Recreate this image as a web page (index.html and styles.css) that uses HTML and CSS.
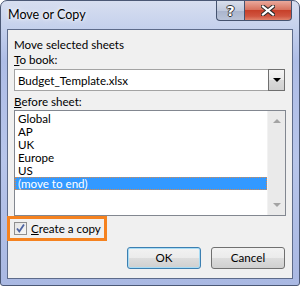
FILE: index.html
```html
<!DOCTYPE html>
<html>
<head>
<meta charset="utf-8">
<link rel="stylesheet" href="styles.css">
</head>
<body>
<div class="window">
  <div class="titlebar">
    <span class="title">Move or Copy</span>
    <div class="caption-btns">
      <div class="cap help">?</div>
      <div class="cap close">
        <svg width="14" height="11" viewBox="0 0 14 11"><path d="M2 1.5 L12 9.5 M12 1.5 L2 9.5" stroke="#2a2a2a" stroke-width="4.2" stroke-linecap="square"/><path d="M2 1.5 L12 9.5 M12 1.5 L2 9.5" stroke="#ffffff" stroke-width="2.2" stroke-linecap="square"/></svg>
      </div>
    </div>
  </div>
  <div class="client">
    <div class="label">Move selected sheets</div>
    <div class="label"><u>T</u>o book:</div>
    <div class="combo">
      <span class="combo-text">Budget_Template.xlsx</span>
      <div class="combo-btn"><span class="arrow-down"></span></div>
    </div>
    <div class="label label-gap"><u>B</u>efore sheet:</div>
    <div class="listbox">
      <ul class="items">
        <li>Global</li>
        <li>AP</li>
        <li>UK</li>
        <li>Europe</li>
        <li>US</li>
        <li class="selected">(move to end)</li>
      </ul>
      <div class="scrollbar">
        <span class="sb-up"></span>
        <span class="sb-down"></span>
      </div>
    </div>
    <div class="check-row">
      <span class="checkbox">
        <svg width="11" height="11" viewBox="0 0 11 11"><path d="M2 5.5 L4.3 8.5 L9 1.5" stroke="#4d63a0" stroke-width="1.8" fill="none"/></svg>
      </span>
      <span class="check-label"><u>C</u>reate a copy</span>
      <span class="highlight"></span>
    </div>
    <div class="buttons">
      <div class="btn btn-default">OK</div>
      <div class="btn">Cancel</div>
    </div>
  </div>
</div>
</body>
</html>
```

FILE: styles.css
```css
html, body {
  margin: 0;
  padding: 0;
  background: #ffffff;
}
body {
  font-family: Lato, "Noto Sans", sans-serif;
  font-size: 11.6px;
  color: #000;
}
.window {
  width: 300px;
  height: 286px;
  box-sizing: border-box;
  border: 1px solid #4b5875;
  border-radius: 7px 7px 3px 3px;
  background: linear-gradient(180deg, #d7def0 0px, #c4d0ec 28px, #aebde6 60px, #b7c5ea 160px, #a9b8e2 286px);
  padding: 0 6px 6px 6px;
  display: flex;
  flex-direction: column;
}
.titlebar {
  height: 28px;
  display: flex;
  align-items: flex-start;
  justify-content: space-between;
}
.title {
  margin-top: 6px;
  margin-left: 1px;
  font-size: 12.5px;
  line-height: 16px;
  text-shadow: 0 0 6px #ffffff, 0 0 3px #ffffff;
}
.caption-btns {
  display: flex;
  margin-right: 1px;
}
.cap {
  height: 19px;
  border: 1px solid #45536f;
  border-top: none;
  display: flex;
  align-items: center;
  justify-content: center;
}
.help {
  width: 27px;
  border-right: none;
  border-radius: 0 0 0 4px;
  background: linear-gradient(180deg, #d9dfec 0%, #c0c9dc 50%, #a9b4cc 51%, #b9c3d8 100%);
  color: #ffffff;
  font-family: "DejaVu Sans", sans-serif;
  font-weight: bold;
  font-size: 14px;
  text-shadow: 1px 0 0 #333, -1px 0 0 #333, 0 1px 0 #333, 0 -1px 0 #333;
}
.close {
  width: 46px;
  border-radius: 0 0 4px 0;
  background: linear-gradient(180deg, #e9a99c 0%, #d7735f 45%, #c7402a 50%, #d05540 80%, #e0836c 100%);
}
.client {
  flex: 1;
  border: 1px solid #5d6b8a;
  background: #f0f0f0;
  padding: 7px 7px 0 6px;
  display: flex;
  flex-direction: column;
}
.label {
  line-height: 15px;
  height: 15px;
  white-space: nowrap;
}
.label-gap {
  margin-top: 3px;
}
.combo {
  margin-top: 2px;
  height: 22px;
  box-sizing: border-box;
  border: 1px solid #a3a3a3;
  background: #ffffff;
  display: flex;
  align-items: center;
  justify-content: space-between;
}
.combo-text {
  padding-left: 3px;
}
.combo-btn {
  width: 17px;
  height: 22px;
  box-sizing: border-box;
  margin: -1px -1px -1px 0;
  border: 1px solid #6f6f6f;
  background: linear-gradient(180deg, #f4f4f4 0%, #eaeaea 50%, #d9d9d9 51%, #d0d0d0 100%);
  display: flex;
  align-items: center;
  justify-content: center;
}
.arrow-down {
  width: 0;
  height: 0;
  border-left: 4px solid transparent;
  border-right: 4px solid transparent;
  border-top: 4px solid #000;
}
.listbox {
  margin-top: 1px;
  margin-right: -1px;
  height: 106px;
  box-sizing: border-box;
  border: 1px solid #828790;
  background: #ffffff;
  display: flex;
}
.items {
  list-style: none;
  margin: 0;
  padding: 1px 0 0 0;
  flex: 1;
}
.items li {
  height: 13px;
  line-height: 13px;
  padding-left: 3px;
  box-sizing: border-box;
}
.items li.selected {
  background: #3399ff;
  color: #ffffff;
  border: 1px dotted #d98a4a;
  padding-left: 2px;
  line-height: 11px;
}
.scrollbar {
  width: 17px;
  background: #eaeaea;
  border-left: 1px solid #f2f2f2;
  display: flex;
  flex-direction: column;
  align-items: center;
  justify-content: space-between;
  padding: 8px 0 8px 0;
}
.sb-up {
  width: 0;
  height: 0;
  border-left: 4px solid transparent;
  border-right: 4px solid transparent;
  border-bottom: 4px solid #a3a3a3;
}
.sb-down {
  width: 0;
  height: 0;
  border-left: 4px solid transparent;
  border-right: 4px solid transparent;
  border-top: 4px solid #a3a3a3;
}
.check-row {
  position: relative;
  margin-top: 6px;
  height: 13px;
  display: flex;
  align-items: center;
  gap: 4px;
  padding-left: 0;
}
.checkbox {
  width: 13px;
  height: 13px;
  box-sizing: border-box;
  border: 1px solid #8f8f8f;
  background: linear-gradient(135deg, #e4e4e4 0%, #f6f6f6 100%);
  display: flex;
  align-items: center;
  justify-content: center;
}
.check-label {
  line-height: 13px;
}
.highlight {
  position: absolute;
  left: -7px;
  top: -6px;
  width: 100px;
  height: 25px;
  box-sizing: border-box;
  border: 3px solid #f5821f;
}
.buttons {
  margin-top: 12px;
  display: flex;
  justify-content: flex-end;
  gap: 10px;
}
.btn {
  width: 74px;
  height: 22px;
  box-sizing: border-box;
  border: 1px solid #707070;
  border-radius: 3px;
  background: linear-gradient(180deg, #f2f2f2 0%, #ebebeb 50%, #dddddd 51%, #cfcfcf 100%);
  display: flex;
  align-items: center;
  justify-content: center;
  line-height: 14px;
}
.btn-default {
  border-color: #3c7fb1;
  box-shadow: inset 0 0 0 1px #a8dcf5;
}
```
